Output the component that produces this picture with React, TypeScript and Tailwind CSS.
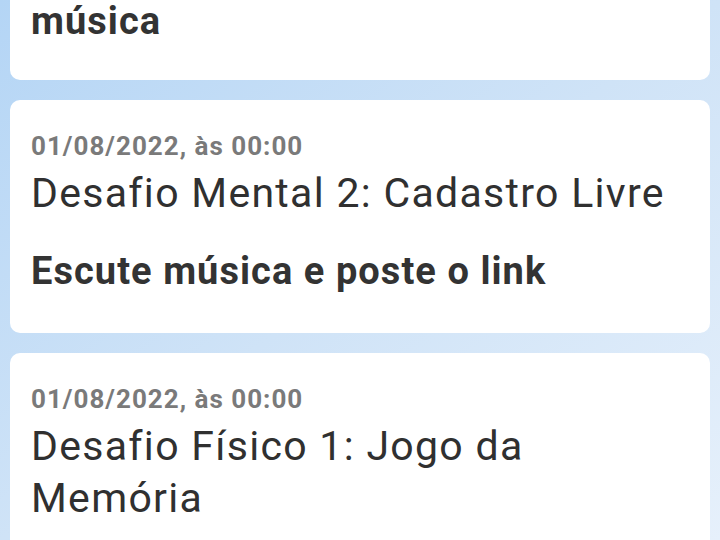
import React from "react";

const font = { fontFamily: "Roboto, 'Noto Sans', sans-serif" };

function DateLine({ children }: { children: React.ReactNode }) {
  return (
    <div className="text-[26px] leading-[30px] font-bold tracking-[1px] text-[#7a7a7a]">{children}</div>
  );
}

function Title({ children }: { children: React.ReactNode }) {
  return (
    <div className="mt-[6px] text-[41px] leading-[52px] font-normal tracking-[1.3px] text-[#303030]">{children}</div>
  );
}

function Desc({ children }: { children: React.ReactNode }) {
  return (
    <div className="mt-[29px] text-[38px] leading-[46px] font-bold tracking-[1.05px] text-[#333333]">{children}</div>
  );
}

export default function App() {
  return (
    <div
      className="w-[720px] h-[540px] overflow-hidden bg-gradient-to-br from-[#b4d5f5] via-[#cfe3f7] to-[#e6f0fb]"
      style={font}
    >
      <div className="flex flex-col gap-[20px] px-[10px]">
        <div className="-mt-[20px] h-[100px] rounded-[10px] bg-white px-[21px] flex flex-col justify-end pb-[36px]">
          <div className="text-[38px] leading-[46px] font-bold tracking-[1.05px] text-[#333333]">música</div>
        </div>
        <div className="rounded-[10px] bg-white px-[21px] pt-[31px] pb-[39px]">
          <DateLine>01/08/2022, às 00:00</DateLine>
          <Title>Desafio Mental 2: Cadastro Livre</Title>
          <Desc>Escute música e poste o link</Desc>
        </div>
        <div className="rounded-[10px] bg-white px-[21px] pt-[31px] pb-[39px]">
          <DateLine>01/08/2022, às 00:00</DateLine>
          <Title>Desafio Físico 1: Jogo da Memória</Title>
          <Desc>Jogue e poste sua pontuação</Desc>
        </div>
      </div>
    </div>
  );
}
